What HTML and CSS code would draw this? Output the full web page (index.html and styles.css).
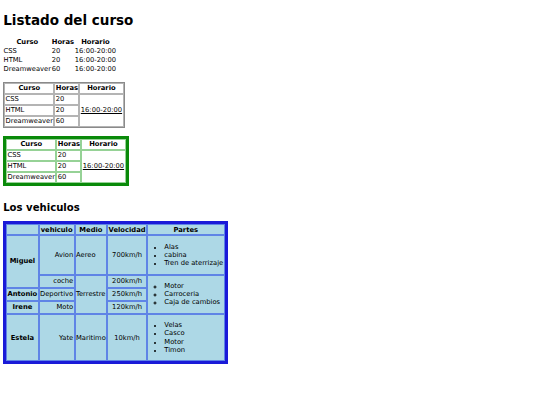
FILE: index.html
```html
<!DOCTYPE html>
<html lang="es">
<head>
<meta charset="utf-8">
<title>Listado del curso</title>
<link rel="stylesheet" href="styles.css">
</head>
<body>
<h1>Listado del curso</h1>
<table class="plain">
  <tr><th>Curso</th><th>Horas</th><th>Horario</th></tr>
  <tr><td>CSS</td><td>20</td><td>16:00-20:00</td></tr>
  <tr><td>HTML</td><td>20</td><td>16:00-20:00</td></tr>
  <tr><td>Dreamweaver</td><td>60</td><td>16:00-20:00</td></tr>
</table>
<br>
<table class="gray">
  <tr><th>Curso</th><th>Horas</th><th>Horario</th></tr>
  <tr><td>CSS</td><td>20</td><td rowspan="3" class="under">16:00-20:00</td></tr>
  <tr><td>HTML</td><td>20</td></tr>
  <tr><td>Dreamweaver</td><td>60</td></tr>
</table>
<br>
<table class="green">
  <tr><th>Curso</th><th>Horas</th><th>Horario</th></tr>
  <tr><td>CSS</td><td>20</td><td rowspan="3" class="under">16:00-20:00</td></tr>
  <tr><td>HTML</td><td>20</td></tr>
  <tr><td>Dreamweaver</td><td>60</td></tr>
</table>
<br>
<h2>Los vehiculos</h2>
<table class="cars">
  <tr><th></th><th>vehiculo</th><th>Medio</th><th>Velocidad</th><th>Partes</th></tr>
  <tr>
    <th rowspan="2">Miguel</th>
    <td class="right">Avion</td>
    <td>Aereo</td>
    <td class="center">700km/h</td>
    <td><ul class="parts"><li>Alas</li><li>cabina</li><li>Tren de aterrizaje</li></ul></td>
  </tr>
  <tr>
    <td class="right">coche</td>
    <td rowspan="3">Terrestre</td>
    <td class="center">200km/h</td>
    <td rowspan="3"><ul class="parts circle"><li>Motor</li><li>Carroceria</li><li>Caja de cambios</li></ul></td>
  </tr>
  <tr>
    <th>Antonio</th>
    <td class="right">Deportivo</td>
    <td class="center">250km/h</td>
  </tr>
  <tr>
    <th>Irene</th>
    <td class="right">Moto</td>
    <td class="center">120km/h</td>
  </tr>
  <tr>
    <th>Estela</th>
    <td class="right">Yate</td>
    <td>Maritimo</td>
    <td class="center">10km/h</td>
    <td><ul class="parts"><li>Velas</li><li>Casco</li><li>Motor</li><li>Timon</li></ul></td>
  </tr>
</table>
</body>
</html>
```
FILE: styles.css
```css
html { background: #fff; }
body {
  margin: 3.2px;
  font-family: "DejaVu Sans", Verdana, sans-serif;
  font-size: 6.75px;
  line-height: 1.215;
  color: #000;
}
h1 {
  font-size: 13.5px;
  margin: 9px 0;
}
h2 {
  font-size: 10.1px;
  margin: 8.4px 0 6.8px;
}
table {
  border-spacing: 0.8px;
  font-size: 6.75px;
}
th, td {
  padding: 0.4px;
}
.under { text-decoration: underline; }

.gray {
  border: 1px solid #8a8a8a;
}
.gray th, .gray td {
  border: 1px solid #b4b4b4;
}

.green {
  border: 3px solid #0a8a0a;
}
.green th, .green td {
  border: 1px solid #96d296;
}

.cars {
  border: 3px solid #1a1ad8;
  background: #add8e6;
}
.cars th, .cars td {
  border: 1px solid #5f84e6;
  background: #add8e6;
}
.right { text-align: right; }
.center { text-align: center; }
.parts {
  margin: 6px 0;
  padding-left: 16px;
}
.parts li::marker { font-size: 5.5px; }
.circle { list-style-type: circle; }
```
